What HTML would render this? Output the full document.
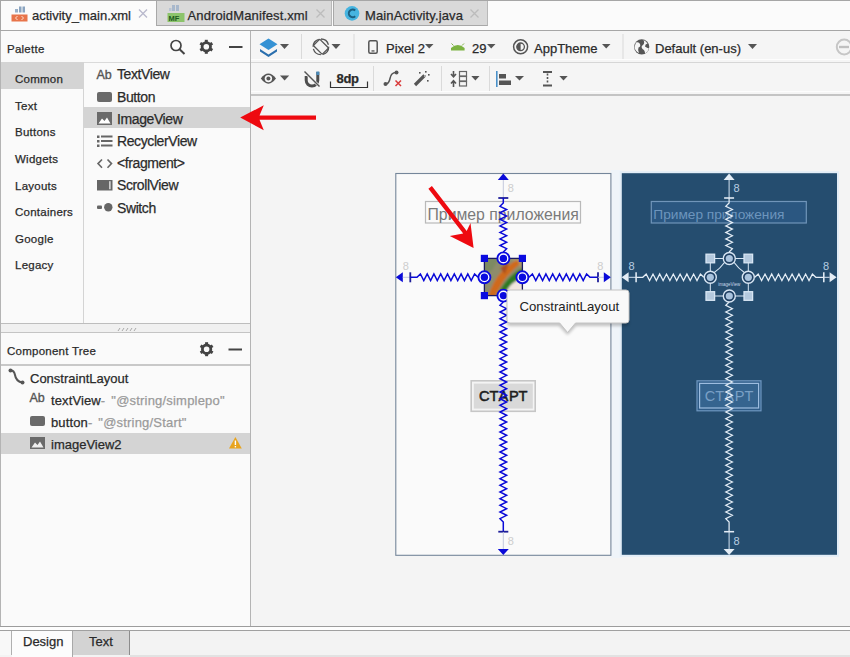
<!DOCTYPE html>
<html><head><meta charset="utf-8">
<style>
*{margin:0;padding:0;box-sizing:border-box}
html,body{width:850px;height:657px;overflow:hidden;background:#f4f4f4;font-family:"Liberation Sans",sans-serif;color:#2a2a2a}
.a{position:absolute}
.t{position:absolute;white-space:nowrap;font-size:13px;line-height:16px;-webkit-text-stroke:0.25px currentColor}
svg{overflow:visible}
</style></head><body>
<!-- tab bar -->
<div class="a" style="left:0;top:0;width:850px;height:31px;background:#fbfbfb;border-top:1px solid #a6a6a6;border-bottom:1px solid #a6a6a6"></div>
<div class="a" style="left:0;top:1px;width:1px;height:30px;background:#a6a6a6"></div>
<div class="a" style="left:156px;top:1px;width:176px;height:25px;background:#d9d9d9;border-left:1px solid #a8a8a8;border-right:1px solid #b8b8b8;border-bottom:1px solid #a8a8a8"></div>
<div class="a" style="left:333px;top:1px;width:155px;height:25px;background:#d9d9d9;border-left:1px solid #a8a8a8;border-right:1px solid #b8b8b8;border-bottom:1px solid #a8a8a8"></div>
<div class="t" style="left:32px;top:8px;font-size:13px">activity_main.xml</div>
<div class="t" style="left:187.5px;top:8px;font-size:13px;letter-spacing:0.13px">AndroidManifest.xml</div>
<div class="t" style="left:365px;top:8px;font-size:13px;letter-spacing:0.13px">MainActivity.java</div>
<svg class="a" style="left:0;top:0" width="500" height="30">
 <path d="M139,9.5 L147,17.5 M147,9.5 L139,17.5" stroke="#b8b8cc" stroke-width="1.3"/><g stroke="#bcbcbc" stroke-width="1.3"><path d="M316.5,9.5 L324.5,17.5 M324.5,9.5 L316.5,17.5"/><path d="M470.5,9.5 L478.5,17.5 M478.5,9.5 L470.5,17.5"/></g>
 <!-- xml icon -->
 <rect x="15" y="9" width="3" height="3.5" fill="#9ab0c8"/><rect x="19" y="6.5" width="2.5" height="6" fill="#8aa4c0"/><rect x="22.5" y="6.5" width="2.5" height="6" fill="#8aa4c0"/>
 <rect x="11.5" y="14.5" width="16" height="7" fill="#e8744a"/>
 <path d="M17.5,16 L15.5,18 L17.5,20 M21.5,16 L23.5,18 L21.5,20" stroke="#fde0d0" stroke-width="1" fill="none"/>
 <!-- MF icon -->
 <rect x="172" y="5" width="3" height="6" fill="#a8b8cc"/><rect x="176" y="5" width="3" height="6" fill="#a8b8cc"/><rect x="169" y="8" width="2.5" height="3" fill="#b8c4d4"/>
 <rect x="167.5" y="13" width="17" height="9" fill="#8cc46c"/>
 <text x="168.5" y="21" font-size="7.5" font-weight="bold" fill="#1e5a1e">MF</text>
 <!-- C icon -->
 <circle cx="352" cy="13.4" r="7.3" fill="#46b4e0"/>
 <path d="M355.2,10.6 A3.8,3.8 0 1 0 355.2,16.2" stroke="#1c5f80" stroke-width="2" fill="none"/>
</svg>

<!-- left panel -->
<div class="a" style="left:0;top:31px;width:251px;height:596px;background:#fafafa;border-left:1px solid #b4b4b4;border-right:1px solid #b4b4b4"></div>
<div class="a" style="left:1px;top:62px;width:249px;height:1px;background:#dadada"></div>
<div class="t" style="left:7px;top:41px;font-size:11.5px;letter-spacing:0.25px">Palette</div>
<svg class="a" style="left:160px;top:32px" width="90" height="30">
 <circle cx="16" cy="13.5" r="5" fill="none" stroke="#444" stroke-width="1.7"/>
 <path d="M19.6,17.2 L24.5,22" stroke="#444" stroke-width="2"/>
 <g transform="translate(46.3,14.8)">
  <circle r="4.2" fill="none" stroke="#444" stroke-width="2.8"/>
  <g fill="#444"><rect x="-1.5" y="-7" width="3" height="3"/><rect x="-1.5" y="4" width="3" height="3"/>
  <rect x="-1.5" y="-7" width="3" height="3" transform="rotate(60)"/><rect x="-1.5" y="4" width="3" height="3" transform="rotate(60)"/>
  <rect x="-1.5" y="-7" width="3" height="3" transform="rotate(120)"/><rect x="-1.5" y="4" width="3" height="3" transform="rotate(120)"/></g>
 </g>
 <rect x="69" y="14" width="13.5" height="2" fill="#444"/>
</svg>
<div class="a" style="left:1px;top:62px;width:82px;height:27px;background:#d4d4d4"></div>
<div class="a" style="left:83px;top:62px;width:1px;height:263px;background:#d4d4d4"></div>
<div class="a" style="left:84px;top:107px;width:166px;height:21px;background:#d4d4d4"></div>
<div class="t" style="left:15px;top:71px;font-size:11.5px;letter-spacing:0.25px">Common</div>
<div class="t" style="left:15px;top:98px;font-size:11.5px;letter-spacing:0.25px">Text</div>
<div class="t" style="left:15px;top:124px;font-size:11.5px;letter-spacing:0.25px">Buttons</div>
<div class="t" style="left:15px;top:151px;font-size:11.5px;letter-spacing:0.25px">Widgets</div>
<div class="t" style="left:15px;top:178px;font-size:11.5px;letter-spacing:0.25px">Layouts</div>
<div class="t" style="left:15px;top:204px;font-size:11.5px;letter-spacing:0.25px">Containers</div>
<div class="t" style="left:15px;top:231px;font-size:11.5px;letter-spacing:0.25px">Google</div>
<div class="t" style="left:15px;top:257px;font-size:11.5px;letter-spacing:0.25px">Legacy</div>

<div class="t" style="left:117px;top:66px;font-size:14px;letter-spacing:-0.4px">TextView</div>
<div class="t" style="left:117px;top:89px;font-size:14px;letter-spacing:-0.4px">Button</div>
<div class="t" style="left:117px;top:111px;font-size:14px;letter-spacing:-0.4px">ImageView</div>
<div class="t" style="left:117px;top:133px;font-size:14px;letter-spacing:-0.4px">RecyclerView</div>
<div class="t" style="left:117px;top:155px;font-size:14px;letter-spacing:-0.4px">&lt;fragment&gt;</div>
<div class="t" style="left:117px;top:177px;font-size:14px;letter-spacing:-0.4px">ScrollView</div>
<div class="t" style="left:117px;top:200px;font-size:14px;letter-spacing:-0.4px">Switch</div>
<svg class="a" style="left:0;top:0" width="250" height="460">
 <text x="96.5" y="78.5" font-size="12.5" fill="#555" stroke="#555" stroke-width="0.35">Ab</text>
 <rect x="97" y="92" width="15" height="10" rx="2" fill="#6a6a6a"/>
 <rect x="97" y="112" width="15" height="13" fill="#6a6a6a"/>
 <path d="M98.5,123.5 L102,118.5 L104.5,121 L107,117.5 L110.5,123.5Z" fill="#fff"/>
 <g fill="#666"><rect x="97" y="135.5" width="2.5" height="2.5"/><rect x="101" y="135.5" width="11.5" height="2"/>
 <rect x="97" y="140" width="2.5" height="2.5"/><rect x="101" y="140" width="11.5" height="2"/>
 <rect x="97" y="144.5" width="2.5" height="2.5"/><rect x="101" y="144.5" width="11.5" height="2"/></g>
 <path d="M102,159.5 L98,163.6 L102,167.7 M107.5,159.5 L111.5,163.6 L107.5,167.7" fill="none" stroke="#666" stroke-width="1.6"/>
 <rect x="97" y="180" width="15.5" height="10.5" fill="#666"/><rect x="109.3" y="181.2" width="1.2" height="8" fill="#fafafa"/>
 <rect x="97" y="205.5" width="5" height="3.5" rx="1" fill="#666"/><circle cx="108.3" cy="207.3" r="4.2" fill="#666"/>
</svg>

<!-- splitter -->
<div class="a" style="left:1px;top:323px;width:249px;height:10px;background:#f0f0f0;border-top:1.5px solid #bdbdbd;border-bottom:1px solid #c4c4c4"></div>
<svg class="a" style="left:0;top:0" width="250" height="340"><path d="M118,331 L120,328 M122,331 L124,328 M126,331 L128,328 M130,331 L132,328 M134,331 L136,328" stroke="#a0a0a0" stroke-width="0.9"/></svg>
<div class="t" style="left:7px;top:343px;font-size:11.5px;letter-spacing:0.25px">Component Tree</div>
<div class="a" style="left:1px;top:364px;width:249px;height:1.5px;background:#c8c8c8"></div>
<div class="a" style="left:1px;top:433px;width:249px;height:21px;background:#d4d4d4"></div>
<div class="t" style="left:30px;top:371px">ConstraintLayout</div>
<div class="t" style="left:51px;top:393px;letter-spacing:0.12px">textView<span style="color:#9a9a9a">-<span style="padding-left:6px;letter-spacing:0.2px">"@string/simplepo"</span></span></div>
<div class="t" style="left:51px;top:415px;letter-spacing:0.12px">button<span style="color:#9a9a9a">-<span style="padding-left:6px;letter-spacing:0.2px">"@string/Start"</span></span></div>
<div class="t" style="left:51px;top:437px">imageView2</div>
<svg class="a" style="left:0;top:330px" width="250" height="130">
 <g transform="translate(206.6,19.2)">
  <circle r="4.2" fill="none" stroke="#444" stroke-width="2.8"/>
  <g fill="#444"><rect x="-1.5" y="-7" width="3" height="3"/><rect x="-1.5" y="4" width="3" height="3"/>
  <rect x="-1.5" y="-7" width="3" height="3" transform="rotate(60)"/><rect x="-1.5" y="4" width="3" height="3" transform="rotate(60)"/>
  <rect x="-1.5" y="-7" width="3" height="3" transform="rotate(120)"/><rect x="-1.5" y="4" width="3" height="3" transform="rotate(120)"/></g>
 </g>
 <rect x="228.5" y="18.5" width="13.5" height="2" fill="#444"/>
 <path d="M10.5,40.5 Q14,40 15,45 Q16,51.5 22.5,52.5" fill="none" stroke="#555" stroke-width="2"/>
 <circle cx="10.5" cy="40.5" r="2" fill="#555"/><circle cx="22.5" cy="52.5" r="2" fill="#555"/>
 <text x="29.5" y="71.5" font-size="12.5" fill="#555" stroke="#555" stroke-width="0.35">Ab</text>
 <rect x="30" y="86" width="15" height="10" rx="2" fill="#6a6a6a"/>
 <rect x="30" y="107" width="15" height="12" fill="#6a6a6a"/>
 <path d="M31.5,117.5 L35,112.5 L37.5,115 L40,111.5 L43.5,117.5Z" fill="#eee"/>
 <path d="M235.4,107 L241.8,118.5 L229,118.5Z" fill="#e8a41e"/>
 <rect x="234.7" y="110.5" width="1.4" height="4.5" fill="#fff"/><rect x="234.7" y="116" width="1.4" height="1.4" fill="#fff"/>
</svg>

<!-- bottom tabs -->
<div class="a" style="left:0;top:626px;width:850px;height:31px;background:#f3f3f3;border-top:1px solid #9c9c9c"></div>
<div class="a" style="left:0;top:627px;width:850px;height:3px;background:#fdfdfd"></div>
<div class="a" style="left:0;top:630px;width:850px;height:1px;background:#a0a0a0"></div>
<div class="a" style="left:0;top:631px;width:12px;height:24px;background:#f8f8f8;border-right:1px solid #b0b0b0"></div>
<div class="a" style="left:12px;top:631px;width:61px;height:26px;background:#fcfcfc;border-right:1px solid #a8a8a8"></div>
<div class="a" style="left:73px;top:631px;width:57px;height:24px;background:#d3d3d3;border-right:1.5px solid #8c8c8c"></div>
<div class="a" style="left:130px;top:655px;width:720px;height:2px;background:#e2e2e2"></div>
<div class="t" style="left:23px;top:634px">Design</div>
<div class="t" style="left:89px;top:634px">Text</div>

<!-- toolbar -->
<div class="a" style="left:251px;top:31px;width:599px;height:65px;background:#f5f5f5;border-bottom:2px solid #c4c4c4"></div>
<div class="a" style="left:251px;top:59px;width:599px;height:1px;background:#fdfdfd"></div>
<div class="a" style="left:251px;top:61.5px;width:599px;height:1.2px;background:#d6d6d6"></div>
<div class="a" style="left:251px;top:91px;width:599px;height:1px;background:#fdfdfd"></div>
<div class="t" style="left:386px;top:41px">Pixel 2</div>
<div class="t" style="left:472px;top:41px">29</div>
<div class="t" style="left:534px;top:41px">AppTheme</div>
<div class="t" style="left:655px;top:41px">Default (en-us)</div>
<div class="t" style="left:336.5px;top:71px;font-weight:bold;letter-spacing:-0.3px">8dp</div>
<svg class="a" style="left:0;top:0" width="850" height="96">
 <g fill="#555">
  <path d="M280,44 L289,44 L284.5,49Z"/><path d="M331.5,44 L340.5,44 L336,49Z"/><path d="M425,44 L433.5,44 L429.2,48.5Z"/>
  <path d="M487,44 L495.5,44 L491.2,48.5Z"/><path d="M602,44 L610.5,44 L606.2,48.5Z"/><path d="M748,44 L757,44 L752.5,49Z"/>
  <path d="M280,75.5 L289.2,75.5 L284.6,80.5Z"/><path d="M471.3,76 L479.5,76 L475.4,80.5Z"/><path d="M515,76 L524,76 L519.5,80.5Z"/><path d="M559.4,76 L567.7,76 L563.5,80.5Z"/>
 </g>
 <g fill="#dadada"><rect x="301" y="34" width="1" height="25"/><rect x="353.5" y="34" width="1" height="25"/><rect x="622.5" y="34" width="1" height="25"/>
 <rect x="373" y="66" width="1" height="25"/><rect x="441" y="66" width="1" height="25"/><rect x="489" y="66" width="1" height="25"/></g>
 <!-- layers -->
 <path d="M260,49 L268.5,54.5 L277,49 L277,51.5 L268.5,57 L260,51.5Z" fill="#2a6fae"/>
 <path d="M268.5,38.5 L277.5,44.3 L268.5,50 L259.5,44.3Z" fill="#3592d4"/>
 <!-- rotate -->
 <circle cx="320.9" cy="46.8" r="7.8" fill="none" stroke="#555" stroke-width="1.3" stroke-dasharray="10 2.2"/>
 <rect x="316.5" y="40.5" width="9" height="12.5" rx="1" transform="rotate(-45 321 46.8)" fill="none" stroke="#555" stroke-width="1.3"/>
 <!-- phone -->
 <rect x="368.8" y="40.8" width="8.4" height="12.4" rx="1.5" fill="none" stroke="#555" stroke-width="1.5"/>
 <rect x="371.5" y="50.3" width="3" height="1.3" fill="#555"/>
 <!-- android -->
 <path d="M451,50.5 L451,48 Q457.8,42 464.6,48 L464.6,50.5Z" fill="#7cb342"/>
 <path d="M451.5,43.5 L453.5,45.5 M464,43.5 L462,45.5" stroke="#7cb342" stroke-width="1"/>
 <!-- theme -->
 <circle cx="520.6" cy="46.8" r="7" fill="none" stroke="#555" stroke-width="1.5"/>
 <circle cx="520.6" cy="46.8" r="3.8" fill="none" stroke="#555" stroke-width="1.3"/>
 <path d="M520.6,43 A3.8,3.8 0 0 0 520.6,50.6Z" fill="#555"/>
 <!-- globe -->
 <circle cx="641.7" cy="46.8" r="7.6" fill="#555"/>
 <path d="M636,42.5 Q639,41.5 640,44 Q641,46.5 638.5,47.5 Q637.5,50 639,53 Q635,51 634.5,47 Z M643.5,40 Q646,41 647.5,43.5 Q645,44 645,46.5 Q647,48 649,48.5 Q648,52 645,53.5 Q645,50 642.5,49 Q640.5,46.5 643,45 Q645,43 643.5,40Z" fill="#f5f5f5"/>
 <!-- zoom out partial -->
 <circle cx="844.2" cy="47" r="7.4" fill="none" stroke="#c6c6c6" stroke-width="2"/>
 <rect x="839" y="45.8" width="10" height="2.4" fill="#c0c0c0"/>
 <!-- eye -->
 <path d="M260.8,78.6 Q268.4,68.5 276,78.6 Q268.4,88.7 260.8,78.6Z" fill="#555"/>
 <circle cx="268.4" cy="78.6" r="3.7" fill="#f5f5f5"/><circle cx="268.4" cy="78.6" r="2" fill="#555"/>
 <!-- magnet off -->
 <path d="M306.2,76 L306.2,80.3 A5.8,5.8 0 0 0 317.8,80.3 L317.8,72" fill="none" stroke="#4e4e4e" stroke-width="3"/>
 <rect x="316.3" y="71.5" width="3" height="3.5" fill="#4a8ab8"/>
 <path d="M304,71 L319.5,86.5" stroke="#f5f5f5" stroke-width="2.6"/>
 <path d="M304.5,71.5 L319.5,86.5" stroke="#555" stroke-width="1.4"/>
 <!-- 8dp bracket -->
 <path d="M330.5,81.5 L330.5,87.5 L367.5,87.5 L367.5,81.5" fill="none" stroke="#333" stroke-width="1.2"/>
 <!-- path x -->
 <path d="M385.5,84 Q389,84 390,78.5 Q391,72.5 396,72.5" fill="none" stroke="#555" stroke-width="1.5"/>
 <circle cx="385.5" cy="84" r="2" fill="#555"/><circle cx="396.5" cy="72.5" r="2" fill="#555"/>
 <path d="M395.5,80.5 L401,86 M401,80.5 L395.5,86" stroke="#d93a3a" stroke-width="1.5"/>
 <!-- wand -->
 <path d="M415,85 L424.5,75.5" stroke="#555" stroke-width="3.2"/>
 <g fill="#555"><rect x="419" y="72" width="1.6" height="1.6"/><rect x="425" y="71" width="1.6" height="1.6"/><rect x="428" y="74" width="1.6" height="1.6"/><rect x="427" y="80" width="1.6" height="1.6"/></g>
 <rect x="424" y="75" width="2" height="2" fill="#aaa"/>
 <!-- pack -->
 <path d="M453.5,71 L453.5,76.5 M451,74 L453.5,76.8 L456,74 M453.5,87 L453.5,81 M451,83.5 L453.5,80.7 L456,83.5" fill="none" stroke="#555" stroke-width="1.6"/>
 <g fill="none" stroke="#666" stroke-width="1.2"><rect x="459.5" y="71.5" width="7" height="4.5"/><rect x="459.5" y="76.5" width="7" height="4.5"/><rect x="459.5" y="81.5" width="7" height="4.5"/></g>
 <!-- align -->
 <rect x="496" y="71" width="1.6" height="16" fill="#4a90c8"/>
 <rect x="499" y="74" width="7" height="4.5" fill="#555"/><rect x="499" y="80.5" width="12" height="4.5" fill="#555"/>
 <!-- margin -->
 <path d="M543,72 L552,72 M543,85.5 L552,85.5" stroke="#555" stroke-width="1.8"/>
 <path d="M547.5,73.5 L547.5,84" stroke="#555" stroke-width="1.6" stroke-dasharray="2 1.5"/>
</svg>
<!-- canvas bg line -->


<svg class="a" style="left:0;top:0" width="850" height="657" viewBox="0 0 850 657" font-family="Liberation Sans, sans-serif">
<!-- white screen -->
<rect x="611" y="170" width="11" height="388" fill="#eff4f9"/>
<rect x="395.8" y="173.5" width="215.1" height="381.8" fill="#fafafa" stroke="#75869a" stroke-width="1.1"/>
<rect x="425.5" y="201.5" width="155" height="21.5" fill="none" stroke="#b9b9b9" stroke-width="1.2"/>
<text x="427.5" y="219.5" font-size="15.8" fill="#7a7a7a">Пример приложения</text>
<rect x="471.2" y="380.8" width="64" height="30.5" fill="#f4f4f4" stroke="#c6c6c6" stroke-width="1.6"/>
<rect x="473.8" y="383.6" width="59" height="25" fill="#d9d9d9"/>
<text x="503.5" y="401.3" font-size="14.6" fill="#1e1e1e" stroke="#1e1e1e" stroke-width="0.55" letter-spacing="0.6" text-anchor="middle">СТАРТ</text>
<!-- image -->
<defs><filter id="bl" x="-20%" y="-20%" width="140%" height="140%"><feGaussianBlur stdDeviation="0.9"/></filter>
<filter id="sh" x="-10%" y="-20%" width="120%" height="160%"><feGaussianBlur stdDeviation="1.6"/></filter>
<clipPath id="imc"><rect x="485" y="259" width="37" height="37"/></clipPath></defs>
<g clip-path="url(#imc)"><g filter="url(#bl)">
<rect x="483" y="257" width="41" height="41" fill="#8e8c6c"/>
<path d="M483,257 L500,257 L492,270 L483,276Z" fill="#7d8a64"/>
<path d="M509,257 L524,257 L524,270Z" fill="#a49a70"/>
<path d="M488,297 Q492,282 502,271 Q510,263 517,260 L520,264 Q510,272 503,282 Q498,290 495,297Z" fill="#cf6a1a"/>
<path d="M496,298 Q501,286 510,277 Q516,271 523,268 L523,276 Q514,281 508,288 Q505,293 503,298Z" fill="#2d7a22"/>
<path d="M506,292 Q511,282 521,279 L524,292Z" fill="#f3e6e0"/>
<path d="M510,298 L524,292 L524,298Z" fill="#f0f0ec"/>
<path d="M500,268 L509,262 L505,274Z" fill="#a85020"/>
</g></g>
<path d="M497.8,180 L503.3,173.5 L508.8,180Z" fill="#0a0ad8"/>
<line x1="503.3" y1="180" x2="503.3" y2="198" stroke="#c4c8dc" stroke-width="1"/>
<line x1="498.3" y1="198" x2="508.3" y2="198" stroke="#1e1e9a" stroke-width="1.8"/>
<path d="M503.3,198 L503.3,203.0 L500.0,206.3 L506.6,209.5 L500.0,212.8 L506.6,216.1 L500.0,219.3 L506.6,222.6 L500.0,225.9 L506.6,229.1 L500.0,232.4 L506.6,235.7 L500.0,238.9 L506.6,242.2 L500.0,245.5 L506.6,248.7 L503.3,252.0" fill="none" stroke="#0a0ad8" stroke-width="1.5"/>
<path d="M503.3,302.0 L500.0,305.3 L506.6,308.7 L500.0,312.0 L506.6,315.3 L500.0,318.7 L506.6,322.0 L500.0,325.3 L506.6,328.7 L500.0,332.0 L506.6,335.3 L500.0,338.7 L506.6,342.0 L500.0,345.3 L506.6,348.7 L500.0,352.0 L506.6,355.3 L500.0,358.7 L506.6,362.0 L500.0,365.3 L506.6,368.7 L500.0,372.0 L506.6,375.3 L500.0,378.7 L506.6,382.0 L500.0,385.3 L506.6,388.7 L500.0,392.0 L506.6,395.3 L500.0,398.7 L506.6,402.0 L500.0,405.3 L506.6,408.7 L500.0,412.0 L506.6,415.3 L500.0,418.7 L506.6,422.0 L500.0,425.3 L506.6,428.7 L500.0,432.0 L506.6,435.3 L500.0,438.7 L506.6,442.0 L500.0,445.3 L506.6,448.7 L500.0,452.0 L506.6,455.3 L500.0,458.7 L506.6,462.0 L500.0,465.3 L506.6,468.7 L500.0,472.0 L506.6,475.3 L500.0,478.7 L506.6,482.0 L500.0,485.3 L506.6,488.7 L500.0,492.0 L506.6,495.3 L500.0,498.7 L506.6,502.0 L500.0,505.3 L506.6,508.7 L500.0,512.0 L506.6,515.3 L500.0,518.7 L503.3,522.0 L503.3,531.7" fill="none" stroke="#0a0ad8" stroke-width="1.5"/>
<line x1="498.3" y1="531.7" x2="508.3" y2="531.7" stroke="#1e1e9a" stroke-width="1.8"/>
<line x1="503.3" y1="532" x2="503.3" y2="549" stroke="#c4c8dc" stroke-width="1"/>
<path d="M497.8,549 L503.3,555 L508.8,549Z" fill="#0a0ad8"/>
<path d="M395.8,277.3 L402.8,272.3 L402.8,282.3Z" fill="#0a0ad8"/>
<line x1="402.8" y1="277.3" x2="410.3" y2="277.3" stroke="#c4c8dc" stroke-width="1"/>
<line x1="410.3" y1="272.3" x2="410.3" y2="282.3" stroke="#1e1e9a" stroke-width="1.8"/>
<path d="M410.3,277.3 L417.0,277.3 L420.4,274.0 L423.8,280.6 L427.2,274.0 L430.6,280.6 L433.9,274.0 L437.3,280.6 L440.7,274.0 L444.1,280.6 L447.5,274.0 L450.9,280.6 L454.3,274.0 L457.7,280.6 L461.1,274.0 L464.4,280.6 L467.8,274.0 L471.2,280.6 L474.6,274.0 L478.0,277.3" fill="none" stroke="#0a0ad8" stroke-width="1.5"/>
<path d="M529.0,277.3 L532.4,274.0 L535.8,280.6 L539.2,274.0 L542.6,280.6 L545.9,274.0 L549.3,280.6 L552.7,274.0 L556.1,280.6 L559.5,274.0 L562.9,280.6 L566.3,274.0 L569.7,280.6 L573.1,274.0 L576.4,280.6 L579.8,274.0 L583.2,280.6 L586.6,274.0 L590.0,277.3 L598,277.3" fill="none" stroke="#0a0ad8" stroke-width="1.5"/>
<line x1="598" y1="272.3" x2="598" y2="282.3" stroke="#1e1e9a" stroke-width="1.8"/>
<line x1="598" y1="277.3" x2="603.8" y2="277.3" stroke="#c4c8dc" stroke-width="1"/>
<path d="M610.8,277.3 L603.8,272.3 L603.8,282.3Z" fill="#0a0ad8"/>
<text x="507.8" y="192" font-size="11" fill="#cdcdcd">8</text>
<text x="507.8" y="545" font-size="11" fill="#cdcdcd">8</text>
<text x="402.8" y="270" font-size="11" fill="#cdcdcd">8</text>
<text x="597.3" y="270" font-size="11" fill="#cdcdcd">8</text>
<rect x="484.4" y="258.4" width="38.0" height="37.200000000000045" fill="none" stroke="#1a1a60" stroke-width="1.3"/>
<rect x="480.79999999999995" y="254.79999999999998" width="7.2" height="7.2" fill="#0a0ae0"/>
<rect x="518.8" y="254.79999999999998" width="7.2" height="7.2" fill="#0a0ae0"/>
<rect x="480.79999999999995" y="292.0" width="7.2" height="7.2" fill="#0a0ae0"/>
<rect x="518.8" y="292.0" width="7.2" height="7.2" fill="#0a0ae0"/>
<circle cx="503.4" cy="258.4" r="6.0" fill="#fff" stroke="#0a0ae0" stroke-width="1.9"/>
<circle cx="503.4" cy="258.4" r="3.7" fill="#0a0ae0"/>
<circle cx="484.4" cy="277.3" r="6.0" fill="#fff" stroke="#0a0ae0" stroke-width="1.9"/>
<circle cx="484.4" cy="277.3" r="3.7" fill="#0a0ae0"/>
<circle cx="522.4" cy="277.3" r="6.0" fill="#fff" stroke="#0a0ae0" stroke-width="1.9"/>
<circle cx="522.4" cy="277.3" r="3.7" fill="#0a0ae0"/>
<circle cx="503.4" cy="295.6" r="6.0" fill="#fff" stroke="#0a0ae0" stroke-width="1.9"/>
<circle cx="503.4" cy="295.6" r="3.7" fill="#0a0ae0"/>
<!-- dark screen -->
<rect x="620.8" y="172.2" width="217.2" height="383.6" fill="#254d6f" stroke="#e2edf7" stroke-width="2"/>
<rect x="651.3" y="201.5" width="155" height="21.5" fill="#2b5781" stroke="#7095ba" stroke-width="1.2"/>
<text x="653.3" y="219" font-size="13.7" fill="#6d95bd">Пример приложения</text>
<rect x="697.0" y="380.8" width="64" height="30" fill="#2f5c88" stroke="#6f97c0" stroke-width="1.2"/>
<rect x="699.6" y="383.4" width="59" height="24.6" fill="#35648f" stroke="#9dbde0" stroke-width="1.2"/>
<text x="729.3" y="401.3" font-size="14.6" fill="#7aa0c6" letter-spacing="0.6" text-anchor="middle">СТАРТ</text>
<path d="M723.6,180 L729.1,173.5 L734.6,180Z" fill="#e4edf6"/>
<line x1="729.1" y1="180" x2="729.1" y2="198" stroke="#d4e2f0" stroke-width="1"/>
<line x1="724.1" y1="198" x2="734.1" y2="198" stroke="#e4edf6" stroke-width="1.55"/>
<path d="M729.1,198 L729.1,203.0 L725.8,206.3 L732.4,209.5 L725.8,212.8 L732.4,216.1 L725.8,219.3 L732.4,222.6 L725.8,225.9 L732.4,229.1 L725.8,232.4 L732.4,235.7 L725.8,238.9 L732.4,242.2 L725.8,245.5 L732.4,248.7 L729.1,252.0" fill="none" stroke="#e4edf6" stroke-width="1.25"/>
<path d="M729.1,302.0 L725.8,305.3 L732.4,308.7 L725.8,312.0 L732.4,315.3 L725.8,318.7 L732.4,322.0 L725.8,325.3 L732.4,328.7 L725.8,332.0 L732.4,335.3 L725.8,338.7 L732.4,342.0 L725.8,345.3 L732.4,348.7 L725.8,352.0 L732.4,355.3 L725.8,358.7 L732.4,362.0 L725.8,365.3 L732.4,368.7 L725.8,372.0 L732.4,375.3 L725.8,378.7 L732.4,382.0 L725.8,385.3 L732.4,388.7 L725.8,392.0 L732.4,395.3 L725.8,398.7 L732.4,402.0 L725.8,405.3 L732.4,408.7 L725.8,412.0 L732.4,415.3 L725.8,418.7 L732.4,422.0 L725.8,425.3 L732.4,428.7 L725.8,432.0 L732.4,435.3 L725.8,438.7 L732.4,442.0 L725.8,445.3 L732.4,448.7 L725.8,452.0 L732.4,455.3 L725.8,458.7 L732.4,462.0 L725.8,465.3 L732.4,468.7 L725.8,472.0 L732.4,475.3 L725.8,478.7 L732.4,482.0 L725.8,485.3 L732.4,488.7 L725.8,492.0 L732.4,495.3 L725.8,498.7 L732.4,502.0 L725.8,505.3 L732.4,508.7 L725.8,512.0 L732.4,515.3 L725.8,518.7 L729.1,522.0 L729.1,531.7" fill="none" stroke="#e4edf6" stroke-width="1.25"/>
<line x1="724.1" y1="531.7" x2="734.1" y2="531.7" stroke="#e4edf6" stroke-width="1.55"/>
<line x1="729.1" y1="532" x2="729.1" y2="549" stroke="#d4e2f0" stroke-width="1"/>
<path d="M723.6,549 L729.1,555 L734.6,549Z" fill="#e4edf6"/>
<path d="M621.6,277.3 L628.6,272.3 L628.6,282.3Z" fill="#e4edf6"/>
<line x1="628.6" y1="277.3" x2="636.1" y2="277.3" stroke="#d4e2f0" stroke-width="1"/>
<line x1="636.1" y1="272.3" x2="636.1" y2="282.3" stroke="#e4edf6" stroke-width="1.55"/>
<path d="M636.1,277.3 L642.8,277.3 L646.2,274.0 L649.6,280.6 L653.0,274.0 L656.4,280.6 L659.7,274.0 L663.1,280.6 L666.5,274.0 L669.9,280.6 L673.3,274.0 L676.7,280.6 L680.1,274.0 L683.5,280.6 L686.9,274.0 L690.2,280.6 L693.6,274.0 L697.0,280.6 L700.4,274.0 L703.8,277.3" fill="none" stroke="#e4edf6" stroke-width="1.25"/>
<path d="M754.8,277.3 L758.2,274.0 L761.6,280.6 L765.0,274.0 L768.4,280.6 L771.7,274.0 L775.1,280.6 L778.5,274.0 L781.9,280.6 L785.3,274.0 L788.7,280.6 L792.1,274.0 L795.5,280.6 L798.9,274.0 L802.2,280.6 L805.6,274.0 L809.0,280.6 L812.4,274.0 L815.8,277.3 L823.8,277.3" fill="none" stroke="#e4edf6" stroke-width="1.25"/>
<line x1="823.8" y1="272.3" x2="823.8" y2="282.3" stroke="#e4edf6" stroke-width="1.55"/>
<line x1="823.8" y1="277.3" x2="829.5999999999999" y2="277.3" stroke="#d4e2f0" stroke-width="1"/>
<path d="M836.5999999999999,277.3 L829.5999999999999,272.3 L829.5999999999999,282.3Z" fill="#e4edf6"/>
<text x="733.6" y="192" font-size="11" fill="#b8cde2">8</text>
<text x="733.6" y="545" font-size="11" fill="#b8cde2">8</text>
<text x="628.6" y="270" font-size="11" fill="#b8cde2">8</text>
<text x="823.0999999999999" y="270" font-size="11" fill="#b8cde2">8</text>
<rect x="710.3" y="258.5" width="38.0" height="37.5" fill="none" stroke="#d8e6f4" stroke-width="1"/>
<path d="M713.3,273.3 Q720.3,268.5 725.3,261.5 M733.3,261.5 Q738.3,268.5 745.3,273.3" fill="none" stroke="#d8e6f4" stroke-width="1.2"/>
<rect x="706.0" y="254.2" width="8.6" height="8.6" fill="#b4c9de" stroke="#d8e6f4" stroke-width="1.3"/>
<rect x="744.0" y="254.2" width="8.6" height="8.6" fill="#b4c9de" stroke="#d8e6f4" stroke-width="1.3"/>
<rect x="706.0" y="291.7" width="8.6" height="8.6" fill="#b4c9de" stroke="#d8e6f4" stroke-width="1.3"/>
<rect x="744.0" y="291.7" width="8.6" height="8.6" fill="#b4c9de" stroke="#d8e6f4" stroke-width="1.3"/>
<circle cx="729.3" cy="258.5" r="6" fill="#1e3f62" stroke="#d8e6f4" stroke-width="1.4"/>
<circle cx="729.3" cy="258.5" r="3.6" fill="#a9c3dd"/>
<circle cx="710.3" cy="277.3" r="6" fill="#1e3f62" stroke="#d8e6f4" stroke-width="1.4"/>
<circle cx="710.3" cy="277.3" r="3.6" fill="#a9c3dd"/>
<circle cx="748.3" cy="277.3" r="6" fill="#1e3f62" stroke="#d8e6f4" stroke-width="1.4"/>
<circle cx="748.3" cy="277.3" r="3.6" fill="#a9c3dd"/>
<circle cx="729.3" cy="296" r="6" fill="#1e3f62" stroke="#d8e6f4" stroke-width="1.4"/>
<circle cx="729.3" cy="296" r="3.6" fill="#a9c3dd"/>
<text x="729.3" y="286" font-size="4.5" fill="#c8d8ea" text-anchor="middle">imageView</text>
<!-- red arrows -->
<path d="M240.2,117.6 L263.8,105.3 L259.5,115.6 L316,115.6 L316,119.8 L259.5,119.8 L263.8,130.2Z" fill="#ee0a10"/>
<path d="M473.6,248.1 L449.8,235.9 L463.2,233.6 L428.4,188.7 L431.9,186 L466.7,230.9 L470.5,223.1Z" fill="#ee0a10"/>
<!-- tooltip -->
<g>
<path d="M510,292 L626,292 Q629,292 629,295 L629,323 Q629,326 626,326 L576,326 L567.5,335 L559,326 L510,326 Q507,326 507,323 L507,295 Q507,292 510,292Z" fill="#000" opacity="0.22" filter="url(#sh)"/>
<path d="M510,290 L626,290 Q629,290 629,293 L629,320 Q629,323 626,323 L575.5,323 L567.6,332.5 L559.7,323 L510,323 Q507,323 507,320 L507,293 Q507,290 510,290Z" fill="#f9f9f9" stroke="#c4c4c4" stroke-width="1"/>
<text x="519.5" y="310.5" font-size="13.2" fill="#222">ConstraintLayout</text>
</g>
</svg>

</body></html>
